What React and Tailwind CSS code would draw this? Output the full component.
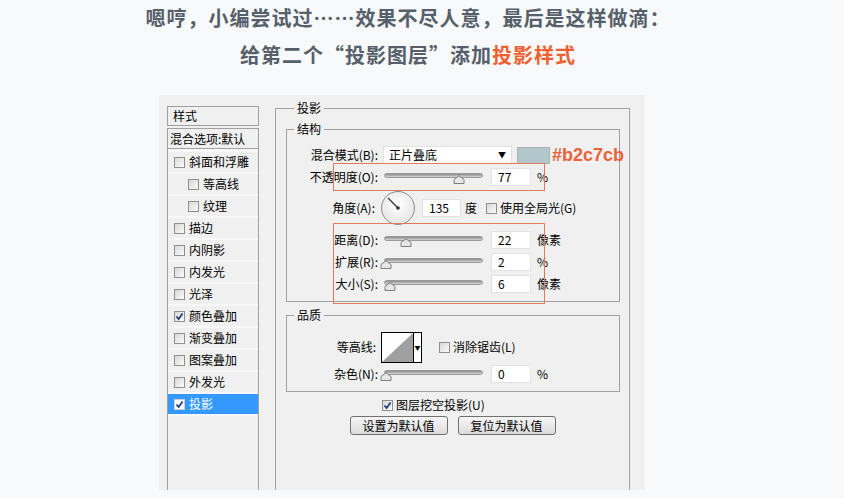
import React from 'react';

const ui = { fontFamily: '"Noto Sans CJK SC", "Noto Sans", sans-serif' };

function Check({ on, light }) {
  return (
    <span
      className={`inline-flex items-center justify-center w-[11px] h-[11px] border shrink-0 ${
        light ? 'border-[#d0d0d0] bg-white' : 'border-[#8e8f8f] bg-gradient-to-br from-[#d8d8d8] to-[#fbfbfb]'
      }`}
    >
      {on && (
        <svg width="9" height="9" viewBox="0 0 9 9">
          <path d="M1.5 4.5 L3.6 7 L7.6 1.5" fill="none" stroke="#23407e" strokeWidth="1.8" />
        </svg>
      )}
    </span>
  );
}

// 左侧样式列表
const items = [
  { t: '斜面和浮雕' },
  { t: '等高线', sub: true },
  { t: '纹理', sub: true },
  { t: '描边' },
  { t: '内阴影' },
  { t: '内发光' },
  { t: '光泽' },
  { t: '颜色叠加', on: true },
  { t: '渐变叠加' },
  { t: '图案叠加' },
  { t: '外发光' },
  { t: '投影', on: true, sel: true },
];

function StyleList() {
  return (
    <div className="w-[92px] flex flex-col shrink-0">
      <div className="h-[20px] border border-[#a0a0a0] pl-[5px] flex items-center">样式</div>
      <div className="mt-[2px] flex-1 border-l border-r border-[#a0a0a0] flex flex-col">
        <div className="h-[21px] border-t border-b border-[#a0a0a0] pl-[2px] flex items-center whitespace-nowrap">
          混合选项:默认
        </div>
        <div className="h-[3px] bg-[#f7f7f7]" />
        {items.map((it) => (
          <div key={it.t} className="h-[22px] flex flex-col">
            <div
              className={`h-[20px] flex items-center gap-[4px] ${it.sub ? 'pl-[20px]' : 'pl-[6px]'} ${
                it.sel ? 'bg-[#3399ff] text-white' : ''
              }`}
            >
              <Check on={it.on} light={it.sel} />
              <span>{it.t}</span>
            </div>
            <div className="h-[2px] bg-[#f8f8f8]" />
          </div>
        ))}
      </div>
    </div>
  );
}

function Slider({ pos }) {
  return (
    <div className="relative w-[99px] h-[14px] shrink-0">
      <div className="absolute left-0 right-0 top-[3px] h-[5px] rounded-full bg-gradient-to-b from-[#8a8a8a] to-[#d8d8d8] border border-[#9a9a9a]" />
      <svg className="absolute top-[5px]" style={{ left: pos - 6 }} width="12" height="9" viewBox="0 0 12 9">
        <path d="M1 8.5 L1 4.5 L6 0.8 L11 4.5 L11 8.5 Z" fill="#e6e6e6" stroke="#7d7d7d" strokeWidth="1" />
      </svg>
    </div>
  );
}

function Input({ v, w = 40 }) {
  return (
    <div className="h-[18px] bg-white border border-[#e2e2e2] pl-[6px] flex items-center shrink-0" style={{ width: w }}>
      {v}
    </div>
  );
}

function SliderRow({ label, lw = 91, pos, v, unit }) {
  return (
    <div className="h-[22px] flex items-center">
      <div className="text-right shrink-0 whitespace-nowrap" style={{ width: lw }}>
        {label}
      </div>
      <div className="ml-[6px]">
        <Slider pos={pos} />
      </div>
      <div className="ml-[8px]">
        <Input v={v} />
      </div>
      <span className="ml-[6px]">{unit}</span>
    </div>
  );
}

function Group({ title, className = '', children }) {
  return (
    <fieldset className={`min-w-0 border border-[#a0a0a0] ${className}`}>
      <legend className="ml-[7px] px-[3px] leading-[16px]">{title}</legend>
      {children}
    </fieldset>
  );
}

function Dial() {
  return (
    <svg width="36" height="36" viewBox="0 0 36 36" className="shrink-0">
      <defs>
        <radialGradient id="dg" cx="50%" cy="40%" r="60%">
          <stop offset="0%" stopColor="#ffffff" />
          <stop offset="100%" stopColor="#e4e4e4" />
        </radialGradient>
      </defs>
      <circle cx="18" cy="18" r="16.5" fill="url(#dg)" stroke="#8c8c8c" strokeWidth="1" />
      <line x1="18" y1="18" x2="8" y2="8" stroke="#333" strokeWidth="1.2" />
      <circle cx="18" cy="18" r="1.8" fill="#333" />
    </svg>
  );
}

function Button({ children }) {
  return (
    <div className="w-[98px] h-[19px] border border-[#707070] rounded-[3px] bg-gradient-to-b from-[#f6f6f6] to-[#dcdcdc] flex items-center justify-center">
      {children}
    </div>
  );
}

export default function App() {
  return (
    <div className="w-[844px] h-[498px] bg-[#f8f9fa] overflow-hidden relative" style={ui}>
      {/* 标题 */}
      <div className="h-[95px] pr-[28px] flex flex-col items-center font-bold text-[20px] text-[#56606a] tracking-[1px]">
        <div className="mt-[5px] leading-[26px] whitespace-nowrap">嗯哼，小编尝试过……效果不尽人意，最后是这样做滴：</div>
        <div className="mt-[11px] leading-[26px] whitespace-nowrap">
          给第二个“投影图层”添加<span className="text-[#f0602f]">投影样式</span>
        </div>
      </div>

      {/* 图层样式对话框 */}
      <div className="relative ml-[159px] w-[486px] h-[395px] bg-[#f0f0f0] text-[12px] text-black flex pl-[8px] pt-[11px] gap-[16px]">
        <StyleList />

        <fieldset className="w-[355px] min-w-0 border-t border-l border-r border-[#a0a0a0] -mt-[6px] flex flex-col">
          <legend className="ml-[18px] px-[3px] leading-[16px]">投影</legend>

          <Group title="结构" className="mt-[5px] ml-[10px] mr-[9px] pb-[6px]">
            <div className="mt-[7px]">
              <div className="h-[22px] flex items-center">
                <div className="w-[91px] text-right shrink-0">混合模式(B):</div>
                <div className="ml-[5px] w-[129px] h-[18px] bg-white border border-[#e2e2e2] pl-[5px] pr-[5px] flex items-center justify-between shrink-0">
                  <span>正片叠底</span>
                  <span className="text-[8px]">▼</span>
                </div>
                <div className="ml-[5px] w-[33px] h-[17px] bg-[#b2c7cb] border border-[#a8b4b6] shrink-0" />
                <span
                  className="ml-[2px] text-[18px] font-bold text-[#e8633a] whitespace-nowrap leading-none"
                  style={{ fontFamily: '"Liberation Sans", Arial, sans-serif' }}
                >
                  #b2c7cb
                </span>
              </div>
              <SliderRow label="不透明度(O):" pos={75} v="77" unit="%" />
              <div className="mt-[2px] h-[36px] flex items-center">
                <div className="w-[88px] text-right shrink-0">角度(A):</div>
                <div className="ml-[5px]">
                  <Dial />
                </div>
                <div className="ml-[6px]">
                  <Input v="135" w={39} />
                </div>
                <span className="ml-[4px]">度</span>
                <span className="ml-[9px] flex items-center gap-[3px]">
                  <Check />
                  <span>使用全局光(G)</span>
                </span>
              </div>
              <div className="mt-[3px]">
                <SliderRow label="距离(D):" pos={22} v="22" unit="像素" />
                <SliderRow label="扩展(R):" pos={2} v="2" unit="%" />
                <SliderRow label="大小(S):" pos={6} v="6" unit="像素" />
              </div>
            </div>
          </Group>

          <Group title="品质" className="mt-[5px] ml-[10px] mr-[9px] pb-[6px]">
            <div className="mt-[8px] h-[32px] flex items-center">
              <div className="w-[89px] text-right shrink-0">等高线:</div>
              <div className="ml-[5px] w-[41px] h-[31px] border border-black bg-white flex shrink-0">
                <svg width="31" height="29" viewBox="0 0 31 29">
                  <path d="M0 29 L31 0 L31 29 Z" fill="#a0a0a0" />
                </svg>
                <div className="flex-1 border-l border-black flex items-center justify-center text-[6px]">▼</div>
              </div>
              <span className="ml-[17px] flex items-center gap-[3px]">
                <Check />
                <span>消除锯齿(L)</span>
              </span>
            </div>
            <SliderRow label="杂色(N):" pos={2} v="0" unit="%" />
          </Group>

          <div className="mt-[4px] h-[18px] flex items-center ml-[106px] gap-[3px]">
            <Check on />
            <span>图层挖空投影(U)</span>
          </div>
          <div className="mt-[2px] flex justify-center gap-[10px]">
            <Button>设置为默认值</Button>
            <Button>复位为默认值</Button>
          </div>
        </fieldset>

        {/* 红色标注框 */}
        <div className="absolute left-[174px] top-[68px] w-[212px] h-[28px] border border-[#e07a5a]" />
        <div className="absolute left-[174px] top-[128px] w-[212px] h-[81px] border border-[#e07a5a]" />
      </div>
    </div>
  );
}
